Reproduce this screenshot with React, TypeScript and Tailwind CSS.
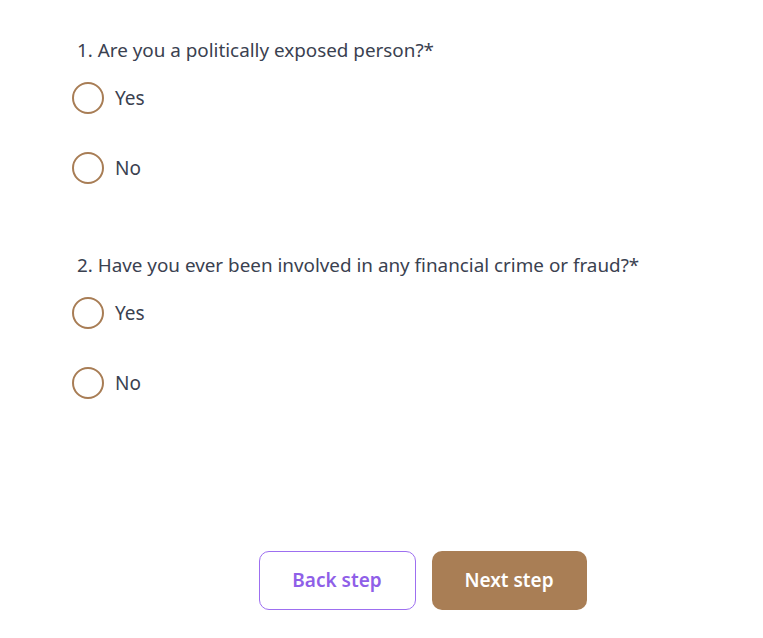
import React, { useState } from 'react'

const questions = [
  { id: 'pep', label: '1. Are you a politically exposed person?*' },
  { id: 'crime', label: '2. Have you ever been involved in any financial crime or fraud?*' },
]

const Radio = ({ label, checked, onClick }: { label: string; checked: boolean; onClick: () => void }) => (
  <button type="button" onClick={onClick} className="flex items-center gap-[11px] h-8 text-left">
    <span className="w-8 h-8 rounded-full border-2 border-[#a87d55] flex items-center justify-center shrink-0">
      {checked && <span className="w-4 h-4 rounded-full bg-[#a87d55]" />}
    </span>
    <span className="text-[19px] text-[#3a4150]">{label}</span>
  </button>
)

export default function App() {
  const [answers, setAnswers] = useState<Record<string, string>>({})

  return (
    <div className="w-[763px] h-[638px] bg-white font-['Noto_Sans',sans-serif] flex flex-col">
      <div className="pl-[72px] pt-[37px] flex flex-col gap-[68px]">
        {questions.map((q) => (
          <div key={q.id} className="flex flex-col">
            <p className="pl-[5px] text-[18.85px] leading-[26px] text-[#3a4150]">{q.label}</p>
            <div className="mt-[19px] flex flex-col gap-[38px]">
              {['Yes', 'No'].map((opt) => (
                <Radio
                  key={opt}
                  label={opt}
                  checked={answers[q.id] === opt}
                  onClick={() => setAnswers({ ...answers, [q.id]: opt })}
                />
              ))}
            </div>
          </div>
        ))}
      </div>
      <div className="mt-auto mb-[28px] flex justify-center gap-4 pl-[82px]">
        <button className="w-[157px] h-[59px] rounded-[10px] border border-[#9d6ff0] text-[#8f5fe8] text-[19px] font-semibold">
          Back step
        </button>
        <button className="w-[155px] h-[59px] rounded-[10px] bg-[#a97e55] text-white text-[19px] font-semibold">
          Next step
        </button>
      </div>
    </div>
  )
}
